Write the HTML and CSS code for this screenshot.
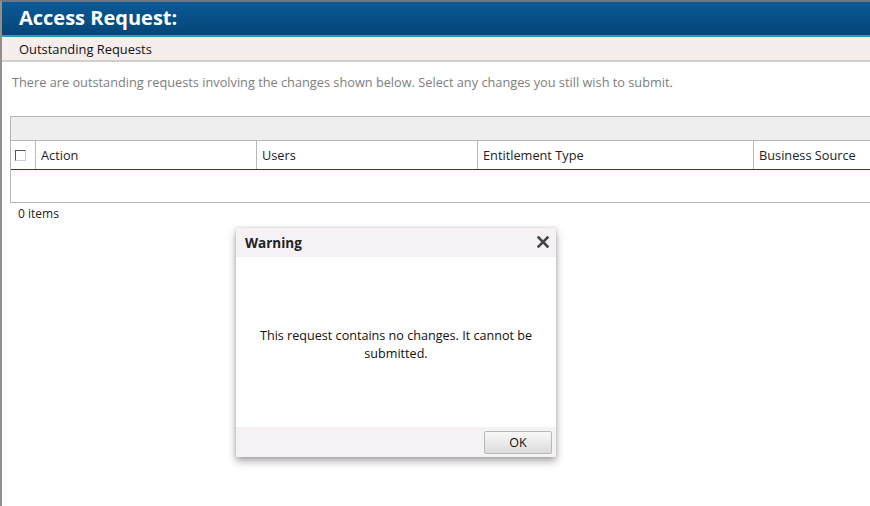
FILE: index.html
```html
<!DOCTYPE html>
<html lang="en">
<head>
    <meta charset="UTF-8">
    <title>Access Request</title>
    <link rel="stylesheet" href="styles.css">
</head>
<body>
    <div class="page">
        <header class="title-bar">Access Request:</header>
        <div class="sub-bar">Outstanding Requests</div>

        <div class="content">
            <p class="intro">There are outstanding requests involving the changes shown below. Select any changes you still wish to submit.</p>

            <div class="grid">
                <div class="grid-toolbar"></div>
                <div class="grid-head">
                    <div class="col col-check"><span class="checkbox"></span></div>
                    <div class="col col-action">Action</div>
                    <div class="col col-users">Users</div>
                    <div class="col col-type">Entitlement Type</div>
                    <div class="col col-source">Business Source</div>
                </div>
                <div class="grid-body"></div>
            </div>
            <div class="item-count">0 items</div>
        </div>
    </div>

    <!-- modal warning -->
    <div class="dialog">
        <div class="dialog-head">
            <span>Warning</span>
            <svg class="close" width="12" height="12" viewBox="0 0 12 12">
                <path d="M1.5 1.5 L10.5 10.5 M10.5 1.5 L1.5 10.5" stroke="#444" stroke-width="2.6" stroke-linecap="square"/>
            </svg>
        </div>
        <div class="dialog-body">This request contains no changes. It cannot be submitted.</div>
        <div class="dialog-foot">
            <button class="ok-btn">OK</button>
        </div>
    </div>
</body>
</html>
```

FILE: styles.css
```css
html, body {
    margin: 0;
    padding: 0;
    height: 100%;
    overflow: hidden;
}
body {
    font-family: "Open Sans", "DejaVu Sans", sans-serif;
    background: #fff;
    color: #222;
}
.page {
    border-left: 2px solid #8f8f8f;
    border-top: 2px solid #6d7886;
    min-height: 100%;
    box-sizing: border-box;
}
.title-bar {
    height: 33px;
    background: linear-gradient(#0b5a98, #044677);
    border-bottom: 2px solid #1ba3c4;
    color: #fff;
    font-weight: bold;
    font-size: 20px;
    line-height: 32px;
    padding-left: 17px;
    box-sizing: content-box;
}
.sub-bar {
    height: 23px;
    background: #f6eded;
    border-bottom: 2px solid #cfcfcf;
    font-size: 12.9px;
    line-height: 25px;
    padding-left: 17px;
    color: #111;
}
.content {
    padding-left: 8px;
}
.intro {
    margin: 10px 0 0 2px;
    font-size: 12.75px;
    color: #7e7e7e;
    line-height: 20px;
}
.grid {
    margin-top: 24px;
    width: 880px;
    border: 1px solid #b5b5b5;
    border-right: none;
}
.grid-toolbar {
    height: 23px;
    background: #eeeeee;
    border-bottom: 1px solid #b5b5b5;
}
.grid-head {
    display: flex;
    height: 28px;
    border-bottom: 1px solid #6e1e1e;
    font-size: 12.75px;
    line-height: 29px;
}
.col {
    padding-left: 5px;
    border-right: 1px solid #b9b9b9;
    box-sizing: border-box;
}
.col-check { width: 25px; padding-left: 4px; }
.col-action { width: 221px; }
.col-users { width: 221px; }
.col-type { width: 276px; }
.col-source { flex: 1; border-right: none; }
.checkbox {
    display: inline-block;
    width: 9px;
    height: 9px;
    border: 1px solid #555;
    border-right-color: #ccc;
    border-bottom-color: #ccc;
    background: #fff;
    vertical-align: -1px;
}
.grid-body {
    height: 32px;
}
.item-count {
    font-size: 12px;
    margin: 3px 0 0 8px;
    line-height: 16px;
}
.dialog {
    position: absolute;
    left: 236px;
    top: 228px;
    width: 320px;
    height: 229px;
    background: #fff;
    box-shadow: 0 4px 8px rgba(0, 0, 0, 0.35), 0 0 3px rgba(0, 0, 0, 0.15);
    display: flex;
    flex-direction: column;
}
.dialog-head {
    height: 29px;
    background: #f5f1f5;
    display: flex;
    align-items: center;
    justify-content: space-between;
    padding: 0 7px 0 9px;
    font-weight: bold;
    font-size: 13.5px;
    color: #222;
}
.close {
    margin-top: -2px;
}
.dialog-body {
    flex: 1;
    display: flex;
    align-items: center;
    justify-content: center;
    text-align: center;
    padding: 6px 20px 0;
    font-size: 12.6px;
    line-height: 18px;
    color: #111;
}
.dialog-foot {
    height: 30px;
    background: #f5f1f5;
    display: flex;
    justify-content: flex-end;
    align-items: center;
    padding-right: 4px;
}
.ok-btn {
    width: 68px;
    height: 23px;
    border: 1px solid #b8b8b8;
    border-radius: 2px;
    background: linear-gradient(#f8f8f8, #dcdcdc);
    font-family: "Open Sans", "DejaVu Sans", sans-serif;
    font-size: 12.5px;
    color: #111;
    padding: 0;
}
```
